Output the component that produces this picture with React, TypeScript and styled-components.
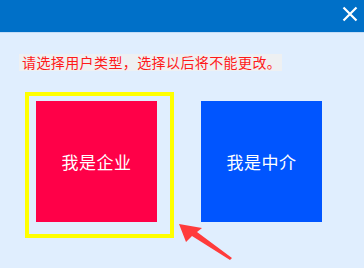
import React from "react";
import styled, { createGlobalStyle } from "styled-components";

const GlobalStyle = createGlobalStyle`
  html, body {
    margin: 0;
    padding: 0;
    width: 364px;
    height: 268px;
    overflow: hidden;
    background: #e0eefe;
    font-family: "Noto Sans CJK SC", "Noto Sans", sans-serif;
  }
`;

const Dialog = styled.div`
  position: relative;
  width: 364px;
  height: 268px;
  background: #e0eefe;
`;

const Header = styled.div`
  height: 32px;
  background: #0070c8;
  border-bottom: 1px solid #c4dcf6;
  display: flex;
  justify-content: flex-end;
  align-items: flex-start;
`;

const CloseButton = styled.button`
  width: 22px;
  height: 22px;
  margin: 3px 3px 0 0;
  padding: 0;
  border: none;
  background: transparent;
  display: flex;
  align-items: center;
  justify-content: center;
  cursor: pointer;
`;

const Body = styled.div`
  padding: 21px 0 0 19px;
`;

const Notice = styled.div`
  width: fit-content;
  height: 17px;
  line-height: 17px;
  padding: 0 1px 0 3px;
  background: #eef0f2;
  color: #ff1a1a;
  font-size: 14px;
  letter-spacing: 0.4px;
  white-space: nowrap;
`;

const Choices = styled.div`
  display: flex;
  gap: 44px;
  margin: 30px 0 0 17px;
`;

const Choice = styled.div<{ $color: string }>`
  width: 121px;
  height: 121px;
  background: ${(p) => p.$color};
  color: #fff;
  font-size: 17px;
  display: flex;
  align-items: center;
  justify-content: center;
  letter-spacing: 0.5px;
  cursor: pointer;
`;

const Highlight = styled.div`
  position: absolute;
  left: 25px;
  top: 92px;
  width: 141px;
  height: 138px;
  border: 4px solid #ffff00;
  pointer-events: none;
`;

const Arrow = styled.svg`
  position: absolute;
  left: 176px;
  top: 220px;
  pointer-events: none;
`;

export default function App() {
  return (
    <>
      <GlobalStyle />
      <Dialog>
        <Header>
          <CloseButton aria-label="关闭">
            <svg width="16" height="16" viewBox="0 0 16 16">
              <path d="M1.5 1.5 L14.5 14.5 M14.5 1.5 L1.5 14.5" stroke="#fff" strokeWidth="2.2" />
            </svg>
          </CloseButton>
        </Header>
        <Body>
          <Notice>请选择用户类型，选择以后将不能更改。</Notice>
          <Choices>
            <Choice $color="#ff0048">我是企业</Choice>
            <Choice $color="#0055ff">我是中介</Choice>
          </Choices>
        </Body>
        <Highlight />
        <Arrow width="60" height="42" viewBox="0 0 60 42">
          <path d="M3 4 L26 8 L21 12 L56 38 L54 40 L16 16 L10 22 Z" fill="#ff3b3b" />
        </Arrow>
      </Dialog>
    </>
  );
}
